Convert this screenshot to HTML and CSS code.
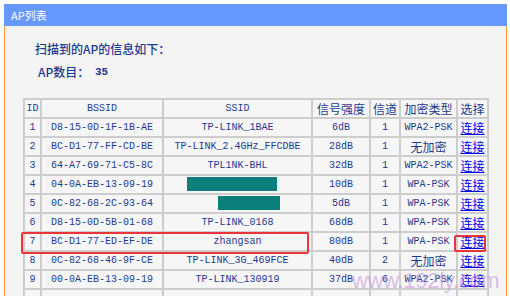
FILE: index.html
```html
<!DOCTYPE html>
<html lang='zh-CN'>
<head>
    <meta charset='UTF-8'>
    <meta name='viewport' content='width=device-width, initial-scale=1.0'>
    <title>AP列表</title>
    <link rel="stylesheet" href="styles.css">
</head>
<body>
    <div class='panel'>
        <div class='panel-head'>AP列表</div>
        <div class='panel-body'>
            <p class='intro'>扫描到的AP的信息如下：</p>
            <p class='count'><span class='count-label'>AP数目：</span><span class='count-num'>35</span></p>

            <div class='list'>
                <table class='ap-table'>
                    <colgroup>
                        <col style='width:17px'>
                        <col style='width:122px'>
                        <col style='width:149px'>
                        <col style='width:58px'>
                        <col style='width:30px'>
                        <col style='width:57px'>
                        <col style='width:31px'>
                    </colgroup>
                    <tr>
                        <th>ID</th><th>BSSID</th><th>SSID</th>
                        <th class='cn'>信号强度</th><th class='cn'>信道</th><th class='cn'>加密类型</th><th class='cn'>选择</th>
                    </tr>
                    <tr><td>1</td><td>D8-15-0D-1F-1B-AE</td><td>TP-LINK_1BAE</td><td>6dB</td><td>1</td><td>WPA2-PSK</td><td class='cn'><a href='#'>连接</a></td></tr>
                    <tr><td>2</td><td>BC-D1-77-FF-CD-BE</td><td>TP-LINK_2.4GHz_FFCDBE</td><td>28dB</td><td>1</td><td class='cn'>无加密</td><td class='cn'><a href='#'>连接</a></td></tr>
                    <tr><td>3</td><td>64-A7-69-71-C5-8C</td><td>TPL1NK-BHL</td><td>32dB</td><td>1</td><td>WPA2-PSK</td><td class='cn'><a href='#'>连接</a></td></tr>
                    <tr><td>4</td><td>04-0A-EB-13-09-19</td><td><span class='mask mask-long'></span></td><td>10dB</td><td>1</td><td>WPA-PSK</td><td class='cn'><a href='#'>连接</a></td></tr>
                    <tr><td>5</td><td>0C-82-68-2C-93-64</td><td><span class='mask mask-short'></span></td><td>5dB</td><td>1</td><td>WPA-PSK</td><td class='cn'><a href='#'>连接</a></td></tr>
                    <tr><td>6</td><td>D8-15-0D-5B-01-68</td><td>TP-LINK_0168</td><td>68dB</td><td>1</td><td>WPA-PSK</td><td class='cn'><a href='#'>连接</a></td></tr>
                    <tr><td>7</td><td>BC-D1-77-ED-EF-DE</td><td>zhangsan</td><td>80dB</td><td>1</td><td>WPA-PSK</td><td class='cn'><a href='#'>连接</a></td></tr>
                    <tr><td>8</td><td>0C-82-68-46-9F-CE</td><td>TP-LINK_3G_469FCE</td><td>40dB</td><td>2</td><td class='cn'>无加密</td><td class='cn'><a href='#'>连接</a></td></tr>
                    <tr><td>9</td><td>00-0A-EB-13-09-19</td><td>TP-LINK_130919</td><td>37dB</td><td>6</td><td>WPA2-PSK</td><td class='cn'><a href='#'>连接</a></td></tr>
                    <tr><td></td><td></td><td></td><td></td><td></td><td></td><td></td></tr>
                </table>
                <!-- red marks over row 7 -->
                <div class='mark mark-row'></div>
                <div class='mark mark-link'></div>
            </div>
        </div>
    </div>
    <div class='watermark'>www.192ly.com</div>
</body>
</html>
```

FILE: styles.css
```css
html, body {
  margin: 0;
  background: #fff;
  overflow: hidden;
}

body {
  width: 510px;
  height: 302px;
  position: relative;
  font-family: "Liberation Mono", "Noto Sans CJK SC", monospace;
  color: #1c3a8e;
}

.panel {
  margin: 4px 0 0 4px;
  width: 503px;
}

.panel-head {
  height: 22px;
  line-height: 22px;
  padding-left: 7px;
  background: #6699ff;
  color: #fff;
  font-family: "Noto Sans CJK SC", sans-serif;
  font-size: 11px;
}

.panel-body {
  height: 255px;
  padding: 15px 0 0 30px;
  background: #f4f4f4;
  border-left: 1px solid #ff9933;
  border-right: 1px solid #ff9933;
  overflow: hidden;
}

.intro {
  margin: 0;
  line-height: 16px;
  font-family: "Noto Sans CJK SC", sans-serif;
  font-size: 12px;
  font-weight: 500;
}

.count {
  margin: 7px 0 0 3px;
  display: flex;
  line-height: 16px;
  font-family: "Noto Sans CJK SC", sans-serif;
  font-size: 12px;
  font-weight: 500;
}

.count-label {
  width: 57px;
}

.count-num {
  font-family: "Liberation Mono", monospace;
  font-size: 11px;
  font-weight: bold;
}

.list {
  position: relative;
  margin: 18px 0 0 -12px;
}

.ap-table {
  table-layout: fixed;
  width: 465px;
  border-collapse: collapse;
  background: #f6f6f6;
}

.ap-table th,
.ap-table td {
  height: 17px;
  padding: 0;
  border: 2px solid #cdcdcd;
  text-align: center;
  font-size: 10px;
  font-weight: normal;
  white-space: nowrap;
  overflow: hidden;
  line-height: 17px;
}

.ap-table .cn {
  font-family: "Noto Sans CJK SC", sans-serif;
  font-size: 12px;
}

.ap-table a {
  color: #0000ee;
  text-decoration: underline;
}

.mask {
  display: inline-block;
  height: 14px;
  background: #0b807a;
  vertical-align: middle;
}

.mask-long {
  width: 90px;
  margin-left: -12px;
}

.mask-short {
  width: 62px;
  margin-left: 22px;
}

.mark {
  position: absolute;
  border: 2px solid #e8343a;
  border-radius: 2px;
}

.mark-row {
  left: -2px;
  top: 134px;
  width: 284px;
  height: 18px;
}

.mark-link {
  left: 431px;
  top: 137px;
  width: 28px;
  height: 13px;
}

.watermark {
  position: absolute;
  left: 352px;
  top: 268px;
  font-family: "Liberation Sans", sans-serif;
  font-size: 22px;
  letter-spacing: -0.3px;
  color: rgba(190, 140, 215, 0.55);
}
```
